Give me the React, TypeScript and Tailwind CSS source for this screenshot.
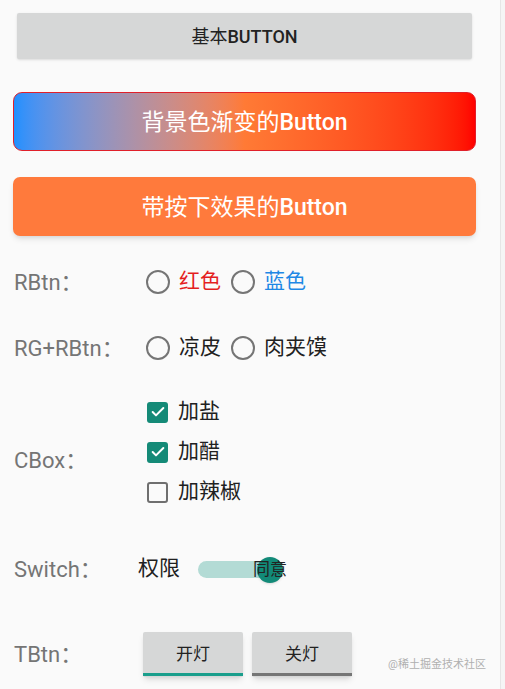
import { Check } from "lucide-react";

const font = { fontFamily: 'Roboto, "Noto Sans CJK SC", sans-serif' };

function Radio({ label, color }: { label: string; color: string }) {
  return (
    <div className="flex items-center">
      <span className="w-[24px] h-[24px] rounded-full border-[2.5px] border-[#757575]" />
      <span className={`ml-[9px] mr-[10px] text-[21px] ${color}`}>{label}</span>
    </div>
  );
}

function CheckRow({ label, checked }: { label: string; checked: boolean }) {
  return (
    <div className="h-[40px] flex items-center">
      {checked ? (
        <span className="w-[21px] h-[21px] ml-[1px] rounded-[3px] bg-[#148a77] flex items-center justify-center">
          <Check size={16} strokeWidth={3} className="text-white" />
        </span>
      ) : (
        <span className="w-[21px] h-[21px] ml-[1px] rounded-[3px] border-[2.5px] border-[#6f6f6f]" />
      )}
      <span className="ml-[10px] text-[21px] text-[#212121]">{label}</span>
    </div>
  );
}

function Label({ text, w }: { text: string; w: string }) {
  return <span className={`${w} shrink-0 text-[22px] text-[#757575]`}>{text}</span>;
}

export default function App() {
  return (
    <div className="flex h-[689px] w-[505px] bg-[#fafafa] overflow-hidden" style={font}>
      <div className="w-[500px] flex flex-col">
        {/* basic button */}
        <button className="mt-[13px] ml-[17px] w-[455px] h-[46px] bg-[#d6d7d7] rounded-[2px] shadow-sm text-[18px] text-[#222]">
          基本<span className="font-medium">BUTTON</span>
        </button>

        {/* gradient button */}
        <button className="mt-[33px] ml-[13px] w-[463px] h-[59px] pt-[3px] rounded-[9px] border border-[#e0202a] bg-linear-to-r from-[#1e90ff] via-[#ff7a35] to-[#ff0000] text-[23px] text-white">
          背景色渐变的<span className="font-medium">Button</span>
        </button>

        {/* pressed effect button */}
        <button className="mt-[26px] ml-[13px] w-[463px] h-[59px] pt-[3px] rounded-[7px] bg-[#ff7a3c] shadow-md text-[23px] text-white">
          带按下效果的<span className="font-medium">Button</span>
        </button>

        {/* RBtn */}
        <div className="mt-[26px] h-[40px] pl-[14px] flex items-center">
          <Label text="RBtn：" w="w-[132px]" />
          <Radio label="红色" color="text-[#e41e1e]" />
          <Radio label="蓝色" color="text-[#1e88e5]" />
        </div>

        {/* RG+RBtn */}
        <div className="mt-[26px] h-[40px] pl-[14px] flex items-center">
          <Label text="RG+RBtn：" w="w-[132px]" />
          <Radio label="凉皮" color="text-[#212121]" />
          <Radio label="肉夹馍" color="text-[#212121]" />
        </div>

        {/* CBox */}
        <div className="mt-[24px] pl-[14px] flex items-center">
          <span className="pt-[16px]">
            <Label text="CBox：" w="w-[132px] block" />
          </span>
          <div className="flex flex-col">
            <CheckRow label="加盐" checked />
            <CheckRow label="加醋" checked />
            <CheckRow label="加辣椒" checked={false} />
          </div>
        </div>

        {/* Switch */}
        <div className="mt-[37px] h-[40px] pl-[14px] flex items-center">
          <Label text="Switch：" w="w-[124px]" />
          <span className="text-[21px] text-[#212121]">权限</span>
          <div className="relative ml-[18px] w-[88px] h-[26px] flex items-center">
            <span className="w-[84px] h-[17px] rounded-full bg-[#b3dbd5]" />
            <span className="absolute left-[59px] top-[1px] w-[26px] h-[26px] rounded-full bg-[#128a78] shadow" />
            <span className="absolute left-[55px] top-[0px] whitespace-nowrap text-[17px] leading-[26px] text-[#222]">同意</span>
          </div>
        </div>

        {/* TBtn */}
        <div className="mt-[43px] pl-[14px] flex items-center relative">
          <Label text="TBtn：" w="w-[129px]" />
          <div className="flex gap-[9px]">
            <button className="w-[100px] h-[45px] rounded-[2px] bg-[#d6d7d7] shadow-md text-[17px] text-[#222] flex flex-col">
              <span className="flex-1 flex items-center justify-center pt-[4px]">开灯</span>
              <span className="h-[3px] mb-[1px] bg-[#1a9e8c]" />
            </button>
            <button className="w-[100px] h-[45px] rounded-[2px] bg-[#d6d7d7] shadow-md text-[17px] text-[#222] flex flex-col">
              <span className="flex-1 flex items-center justify-center pt-[4px]">关灯</span>
              <span className="h-[3px] mb-[1px] bg-[#757575]" />
            </button>
          </div>
          <span className="absolute right-[14px] top-[25px] text-[11px] text-[#b0b0b0]">@稀土掘金技术社区</span>
        </div>
      </div>
      <div className="w-[5px] border-l border-[#e6e6e6] bg-[#f5f5f5]" />
    </div>
  );
}
